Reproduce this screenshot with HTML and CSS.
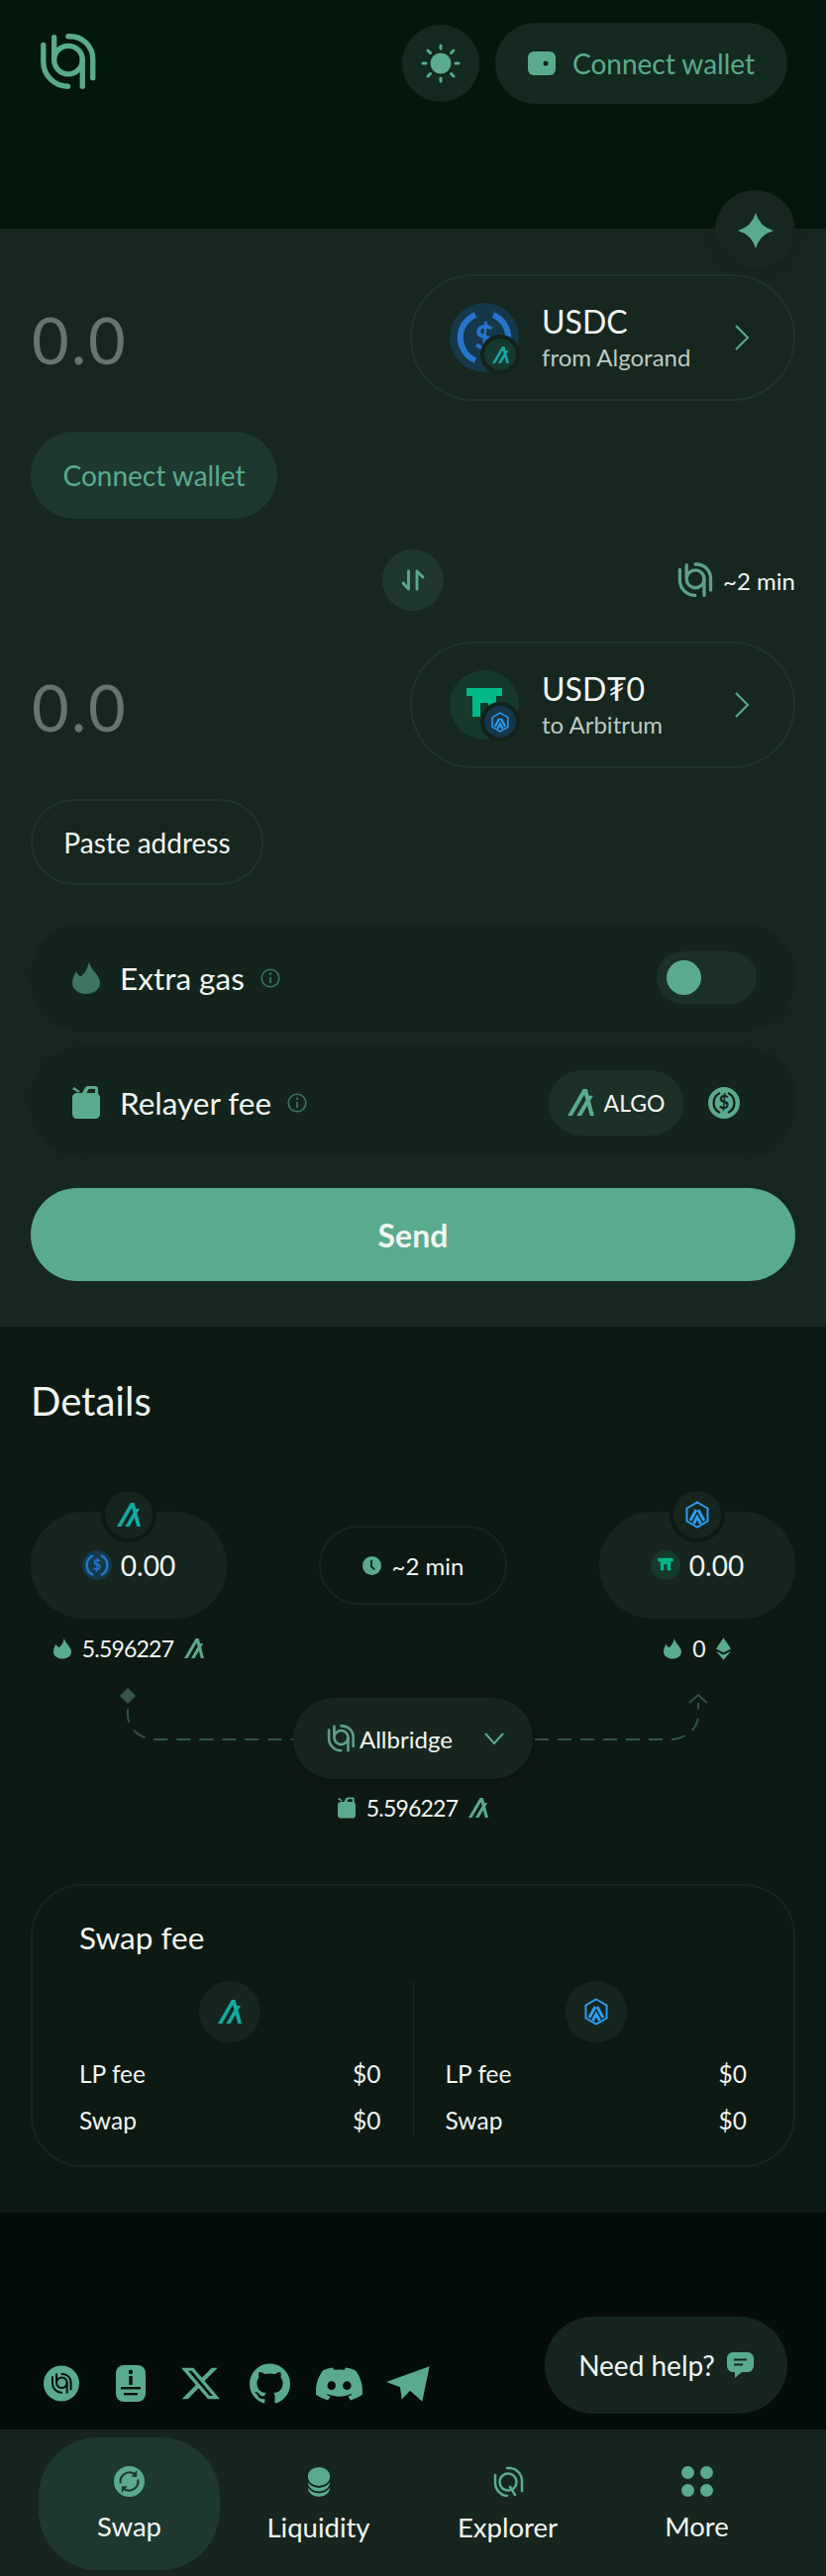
FILE: index.html
```html
<!DOCTYPE html>
<html lang="en">
<head>
<meta charset="utf-8">
<title>Allbridge</title>
<link rel="stylesheet" href="styles.css">
</head>
<body>
<svg class="defs" aria-hidden="true">
  <symbol id="logo" viewBox="36 30 62 64"><g fill="none" stroke="currentColor" stroke-width="5.6" stroke-linecap="round"><path d="M41.6 44V62A26 26 0 0 0 67.500 88"/><path d="M53 36V60A15 15 0 1 0 68 45A15 15 0 0 0 53 60"/><path d="M83 60V88"/><path d="M68 35H70A24 24 0 0 1 94 59V79"/></g></symbol>
  <symbol id="algo" viewBox="0 0 24 24"><path fill="currentColor" d="M23.98 23.99h-3.75l-2.44-9.07-5.25 9.07H8.35l8.1-14.04-1.3-4.87L4.2 24H0L13.9 0h3.7l1.62 6h3.8l-2.6 4.5 3.56 13.49z"/></symbol>
  <symbol id="arb" viewBox="0 0 24 28"><path fill="none" stroke="currentColor" stroke-width="2" d="M12 1.500 22.500 7.500V20.500L12 26.500 1.500 20.500V7.500Z"/><g fill="none" stroke="currentColor" stroke-width="3"><path d="M5 20 11 9"/><path d="M19 20 13 9"/><path d="M8.500 23 12 16.500 15.500 23"/></g></symbol>
  <symbol id="flame" viewBox="0 0 28 33"><path fill="currentColor" d="M17 0C17 8 28 13 28 22 28 29 21 33 14 33 6 33 0 28 0 22 0 17 2 14 4 10 5 13 7 15 9 15 13 12 16 6 17 0Z"/></symbol>
  <symbol id="can" viewBox="0 0 28 33"><path fill="currentColor" d="M5 7H10L13 1.500C13.600.6 14.500 0 15.500 0H23.500C25 0 26 1 26 2.500V7.500C27.200 8.500 28 10 28 12V28C28 31 26 33 23 33H5C2 33 0 31 0 28V12C0 9 2 7 5 7ZM16.500 3 14.500 7H23V3ZM0 3 2 1 8 5.500 6 6.500Z"/></symbol>
  <symbol id="star" viewBox="0 0 36 36"><path fill="currentColor" d="M18 0Q22 14 36 18 22 22 18 36 14 22 0 18 14 14 18 0Z"/></symbol>
  <symbol id="info" viewBox="0 0 20 20"><circle cx="10" cy="10" r="8.800" fill="none" stroke="currentColor" stroke-width="1.600"/><path stroke="currentColor" stroke-width="1.800" d="M10 9V15"/><circle cx="10" cy="5.800" r="1.200" fill="currentColor"/></symbol>
  <symbol id="chev" viewBox="0 0 14 26"><path fill="none" stroke="currentColor" stroke-width="2" d="M1 1 13 13 1 25"/></symbol>
  <symbol id="usdc" viewBox="0 0 70 70"><circle cx="35" cy="35" r="35" fill="#16384a"/><g fill="none" stroke="#2775ca" stroke-width="6"><path d="M26 12A25 25 0 0 0 26 58"/><path d="M44 12A25 25 0 0 1 44 58"/></g></symbol>
  <symbol id="tether" viewBox="0 0 70 70"><circle cx="35" cy="35" r="35" fill="#16392c"/><path fill="#00b988" d="M17 18H53V26H47V47H39V33H31V47H23V26H17Z"/></symbol>
  <symbol id="eth" viewBox="0 0 16 24"><path fill="currentColor" d="M8 0 16 12 8 16 0 12ZM0 14.500 8 18.500 16 14.500 8 24Z"/></symbol>
</svg>

<header class="top">
  <svg class="logo"><use href="#logo"/></svg>
  <button class="round theme" aria-label="Theme">
    <svg width="40" height="40" viewBox="0 0 40 40"><circle cx="20" cy="20" r="10.500" fill="currentColor"/><g stroke="currentColor" stroke-width="3" stroke-linecap="round"><path d="M20 2V5M20 35V38M2 20H5M35 20H38M7 7 9.500 9.500M30.500 30.500 33 33M33 7 30.500 9.500M9.500 30.500 7 33"/></g></svg>
  </button>
  <button class="wallet">
    <svg width="28" height="24" viewBox="0 0 28 24"><rect width="28" height="24" rx="6" fill="currentColor"/><circle cx="18" cy="12" r="2.500" fill="#12261c"/></svg>
    <span>Connect wallet</span>
  </button>
</header>

<main class="card">
  <button class="round sparkle" aria-label="Assistant"><svg width="36" height="36"><use href="#star"/></svg></button>

  <section class="token-row">
    <div class="amount">0.0</div>
    <button class="token">
      <span class="token-icon">
        <svg width="70" height="70" viewBox="0 0 70 70"><use href="#usdc"/><text x="35" y="47" class="dollar" text-anchor="middle" fill="#2775ca">$</text></svg>
        <span class="chain-badge algo-badge"><svg width="17" height="17"><use href="#algo"/></svg></span>
      </span>
      <span class="token-text"><b>USDC</b><small>from Algorand</small></span>
      <svg class="chev" width="14" height="26"><use href="#chev"/></svg>
    </button>
  </section>

  <button class="connect">Connect wallet</button>

  <div class="swap-row">
    <span></span>
    <button class="round swap" aria-label="Swap direction">
      <svg width="24" height="24" viewBox="0 0 24 24"><g fill="none" stroke="currentColor" stroke-width="2.800" stroke-linecap="round" stroke-linejoin="round"><path d="M7.500 3V21L2 15"/><path d="M16 21V3L22 9"/></g></svg>
    </button>
    <span class="eta"><svg width="37" height="38"><use href="#logo"/></svg>~2 min</span>
  </div>

  <section class="token-row">
    <div class="amount">0.0</div>
    <button class="token">
      <span class="token-icon">
        <svg width="70" height="70"><use href="#tether"/></svg>
        <span class="chain-badge arb-badge"><svg width="18" height="21"><use href="#arb"/></svg></span>
      </span>
      <span class="token-text"><b>USD₮0</b><small>to Arbitrum</small></span>
      <svg class="chev" width="14" height="26"><use href="#chev"/></svg>
    </button>
  </section>

  <button class="paste">Paste address</button>

  <section class="option gas">
    <svg class="dim" width="28" height="33"><use href="#flame"/></svg>
    <span class="option-label">Extra gas</span>
    <svg class="info" width="20" height="20"><use href="#info"/></svg>
    <span class="toggle"><i></i></span>
  </section>

  <section class="option fee">
    <svg class="green" width="28" height="33"><use href="#can"/></svg>
    <span class="option-label">Relayer fee</span>
    <svg class="info" width="20" height="20"><use href="#info"/></svg>
    <span class="fee-pill"><svg class="green" width="27" height="27"><use href="#algo"/></svg>ALGO</span>
    <svg class="fee-coin" width="32" height="32" viewBox="0 0 32 32"><circle cx="16" cy="16" r="16" fill="#5aab8d"/><g fill="none" stroke="#12241b" stroke-width="2.400"><path d="M12 6A11 11 0 0 0 12 26"/><path d="M20 6A11 11 0 0 1 20 26"/></g><text x="16" y="22" class="dollar-s" text-anchor="middle" fill="#12241b">$</text></svg>
  </section>

  <button class="send">Send</button>
</main>

<section class="details">
  <h2>Details</h2>
  <div class="chains">
    <div class="chain-box">
      <span class="chain-top teal"><svg width="24" height="26"><use href="#algo"/></svg></span>
      <svg width="30" height="30" viewBox="0 0 70 70"><use href="#usdc"/><text x="35" y="47" class="dollar" text-anchor="middle" fill="#2775ca">$</text></svg><span>0.00</span>
    </div>
    <div class="clock-pill">
      <svg width="19" height="19" viewBox="0 0 20 20"><circle cx="10" cy="10" r="10" fill="#5aab8d"/><path d="M9.500 4V11L13 14" fill="none" stroke="#0d1a13" stroke-width="1.800"/></svg>
      <span>~2 min</span>
    </div>
    <div class="chain-box">
      <span class="chain-top blue"><svg width="24" height="28"><use href="#arb"/></svg></span>
      <svg width="30" height="30"><use href="#tether"/></svg><span>0.00</span>
    </div>
  </div>
  <div class="gas-row">
    <span class="mini"><svg class="green" width="18" height="22"><use href="#flame"/></svg><span>5.596227</span><svg class="green" width="20" height="20"><use href="#algo"/></svg></span>
    <span class="mini"><svg class="green" width="18" height="22"><use href="#flame"/></svg><span>0</span><svg class="green" width="15" height="23"><use href="#eth"/></svg></span>
  </div>
  <div class="route">
    <svg class="route-lines" width="834" height="100" viewBox="0 0 834 100">
      <path d="M129 25 121 33 129 41 137 33Z" fill="#37564a"/>
      <g fill="none" stroke="#2f5546" stroke-width="2" stroke-dasharray="14 9">
        <path d="M129 46V52C129 66 141 77 158 77H296"/>
        <path d="M540 77H676C693 77 705 66 705 52V40"/>
      </g>
      <path d="M696 40 705 32 714 40" fill="none" stroke="#2f5546" stroke-width="2"/>
    </svg>
    <button class="bridge">
      <svg class="green-logo" width="30" height="30"><use href="#logo"/></svg>
      <span>Allbridge</span>
      <svg class="bridge-chev" width="20" height="12" viewBox="0 0 20 12"><path d="M1 1 10 11 19 1" fill="none" stroke="#5aab8d" stroke-width="2"/></svg>
    </button>
  </div>
  <div class="relay"><span class="mini"><svg class="green" width="18" height="22"><use href="#can"/></svg><span>5.596227</span><svg class="green" width="20" height="20"><use href="#algo"/></svg></span></div>

  <div class="fees">
    <h3>Swap fee</h3>
    <div class="fee-grid">
      <div class="fee-col">
        <span class="fee-chain teal"><svg width="24" height="26"><use href="#algo"/></svg></span>
        <div class="fee-line"><span>LP fee</span><span>$0</span></div>
        <div class="fee-line"><span>Swap</span><span>$0</span></div>
      </div>
      <div class="fee-divider"></div>
      <div class="fee-col">
        <span class="fee-chain blue"><svg width="24" height="28"><use href="#arb"/></svg></span>
        <div class="fee-line"><span>LP fee</span><span>$0</span></div>
        <div class="fee-line"><span>Swap</span><span>$0</span></div>
      </div>
    </div>
  </div>
</section>

<footer class="foot">
  <nav class="social">
    <span class="soc"><svg width="36" height="37" viewBox="0 0 36 37"><circle cx="18" cy="18.500" r="18" fill="#5aab8d"/><svg x="7" y="7" width="22" height="23" class="on-green"><use href="#logo"/></svg></svg></span>
    <span class="soc"><svg width="30" height="37" viewBox="0 0 30 37"><rect width="30" height="37" rx="8" fill="#5aab8d"/><g fill="#04100a"><circle cx="15" cy="7" r="2.200"/><rect x="13.300" y="11" width="3.400" height="9"/><rect x="5" y="22" width="20" height="2.400"/><rect x="8" y="28" width="14" height="2.400"/></g></svg></span>
    <span class="soc"><svg width="39" height="35" viewBox="0 0 24 24" preserveAspectRatio="none"><path fill="#5aab8d" d="M18.901 1.153h3.68l-8.04 9.19L24 22.846h-7.406l-5.8-7.584-6.638 7.584H.474l8.6-9.83L0 1.154h7.594l5.243 6.932ZM17.610 20.644h2.039L6.486 3.240H4.298Z"/></svg></span>
    <span class="soc"><svg width="41" height="41" viewBox="0 0 24 24"><path fill="#5aab8d" d="M12 .297c-6.630 0-12 5.373-12 12 0 5.303 3.438 9.800 8.205 11.385.6.113.82-.258.82-.577 0-.285-.01-1.040-.015-2.040-3.338.724-4.042-1.610-4.042-1.610C4.422 18.070 3.633 17.700 3.633 17.700c-1.087-.744.084-.729.084-.729 1.205.084 1.838 1.236 1.838 1.236 1.070 1.835 2.809 1.305 3.495.998.108-.776.417-1.305.76-1.605-2.665-.3-5.466-1.332-5.466-5.930 0-1.310.465-2.380 1.235-3.220-.135-.303-.54-1.523.105-3.176 0 0 1.005-.322 3.300 1.230.96-.267 1.980-.399 3-.405 1.020.006 2.040.138 3 .405 2.280-1.552 3.285-1.230 3.285-1.230.645 1.653.24 2.873.12 3.176.765.84 1.230 1.910 1.230 3.220 0 4.610-2.805 5.625-5.475 5.920.42.36.81 1.096.81 2.220 0 1.606-.015 2.896-.015 3.286 0 .315.21.69.825.57C20.565 22.092 24 17.592 24 12.297c0-6.627-5.373-12-12-12"/></svg></span>
    <span class="soc"><svg width="47" height="36" viewBox="0 2 24 20" preserveAspectRatio="none"><path fill="#5aab8d" d="M20.317 4.370a19.791 19.791 0 0 0-4.885-1.515.074.074 0 0 0-.079.037c-.21.375-.444.864-.608 1.250a18.270 18.270 0 0 0-5.487 0 12.640 12.640 0 0 0-.617-1.250.077.077 0 0 0-.079-.037A19.736 19.736 0 0 0 3.677 4.370a.07.07 0 0 0-.032.027C.533 9.046-.32 13.580.099 18.057a.082.082 0 0 0 .031.057 19.900 19.900 0 0 0 5.993 3.030.078.078 0 0 0 .084-.028 14.090 14.090 0 0 0 1.226-1.994.076.076 0 0 0-.041-.106 13.107 13.107 0 0 1-1.872-.892.077.077 0 0 1-.008-.128 10.200 10.200 0 0 0 .372-.292.074.074 0 0 1 .077-.01c3.928 1.793 8.180 1.793 12.062 0a.074.074 0 0 1 .078.01c.12.098.246.198.373.292a.077.077 0 0 1-.006.127 12.299 12.299 0 0 1-1.873.892.077.077 0 0 0-.041.107c.36.698.772 1.362 1.225 1.993a.076.076 0 0 0 .084.028 19.839 19.839 0 0 0 6.002-3.030.077.077 0 0 0 .032-.054c.5-5.177-.838-9.674-3.549-13.660a.061.061 0 0 0-.031-.03zM8.020 15.330c-1.183 0-2.157-1.085-2.157-2.419 0-1.333.956-2.419 2.157-2.419 1.210 0 2.176 1.096 2.157 2.420 0 1.333-.956 2.418-2.157 2.418zm7.975 0c-1.183 0-2.157-1.085-2.157-2.419 0-1.333.955-2.419 2.157-2.419 1.210 0 2.176 1.096 2.157 2.420 0 1.333-.946 2.418-2.157 2.418z"/></svg></span>
    <span class="soc"><svg width="44" height="36" viewBox="0 0 132 108"><path fill="#5aab8d" d="M131 1 0 48 42 64 47 101 72 74 109 107Z"/></svg></span>
  </nav>
  <button class="help"><span>Need help?</span>
    <svg width="27" height="26" viewBox="0 0 27 26"><path fill="#5aab8d" d="M6 0H21A6 6 0 0 1 27 6V14A6 6 0 0 1 21 20H15L8 26V20H6A6 6 0 0 1 0 14V6A6 6 0 0 1 6 0Z"/><path d="M7 7.500H20M7 12.500H16" stroke="#16261f" stroke-width="2.200"/></svg>
  </button>
</footer>

<nav class="tabs">
  <a class="tab active">
    <svg width="31" height="31" viewBox="0 0 32 32"><circle cx="16" cy="16" r="16" fill="#5aab8d"/><g fill="none" stroke="#1e3830" stroke-width="2.200"><path d="M7 18A9.500 9.500 0 0 1 22 8.500"/><path d="M25 14A9.500 9.500 0 0 1 10 23.500"/></g><path d="M24 4V11H18Z" fill="#1e3830"/><path d="M8 28V21H14Z" fill="#1e3830"/></svg>
    <span>Swap</span>
  </a>
  <a class="tab">
    <svg width="26" height="32" viewBox="-1 0 26 32"><g fill="#5aab8d" stroke="#16261f" stroke-width="1.800"><ellipse cx="12" cy="21.500" rx="12" ry="10.500"/><ellipse cx="12" cy="16" rx="12" ry="10.500"/><ellipse cx="12" cy="10.500" rx="12" ry="10.500"/></g></svg>
    <span>Liquidity</span>
  </a>
  <a class="tab">
    <svg class="green" width="32" height="32" viewBox="0 0 32 32"><g fill="none" stroke="currentColor" stroke-width="2.500" stroke-linecap="round"><path d="M3 9V17A13 13 0 0 0 15 30"/><circle cx="16" cy="16" r="8.500"/><path d="M18 21 23 29"/><path d="M15 2H17A13 13 0 0 1 30 15V25"/></g></svg>
    <span>Explorer</span>
  </a>
  <a class="tab">
    <span class="dots"><i></i><i></i><i></i><i></i></span>
    <span>More</span>
  </a>
</nav>
</body>
</html>
```

FILE: styles.css
```css
* { box-sizing: border-box; }
html, body { margin: 0; padding: 0; }
body {
  width: 834px;
  height: 2602px;
  overflow: hidden;
  background: #04100a;
  color: #f1f5f2;
  font-family: "Lato", "Noto Sans", sans-serif;
  font-size: 28px;
}
.defs { position: absolute; width: 0; height: 0; }
button {
  font: inherit;
  color: inherit;
  background: none;
  border: 0;
  padding: 0;
}
h2, h3 { margin: 0; font-weight: 400; }

.green { color: #5aab8d; }
.dim { color: #3d7562; }
.teal { color: #13aaa4; }
.blue { color: #2d9cf0; }
.dollar { font: 700 34px "Lato", sans-serif; }
.dollar-s { font: 700 18px "Lato", sans-serif; }

.top {
  height: 231px;
  background: #04170d;
  display: flex;
  align-items: flex-start;
  padding: 23px 39px 0 38px;
  color: #5aab8d;
}
.logo { width: 60px; height: 61px; margin-top: 9px; margin-right: auto; color: #5aab8d; }
.round {
  display: flex;
  align-items: center;
  justify-content: center;
  border-radius: 50%;
}
.theme {
  width: 78px;
  height: 78px;
  margin: 2px 16px 0 0;
  background: #14291f;
  color: #5aab8d;
}
.wallet {
  height: 82px;
  width: 295px;
  border-radius: 41px;
  background: #14291f;
  color: #5aab8d;
  display: flex;
  align-items: center;
  justify-content: center;
  gap: 17px;
}

.card {
  position: relative;
  height: 1109px;
  padding: 46px 31px 0;
  background: #16271f;
}
.sparkle {
  position: absolute;
  top: -39px;
  right: 31px;
  width: 81px;
  height: 81px;
  background: #16271f;
  color: #5aab8d;
  box-shadow: 0 2px 8px rgba(10, 22, 16, 0.25);
}
.token-row {
  display: flex;
  align-items: center;
  justify-content: space-between;
  height: 128px;
}
.amount {
  font-size: 65px;
  font-weight: 400;
  line-height: 70px;
  color: #63756d;
  margin-top: 4px;
  letter-spacing: 2px;
  padding-left: 1px;
}
.token {
  width: 389px;
  height: 128px;
  border: 2px solid #1e3329;
  border-radius: 64px;
  display: flex;
  align-items: center;
  padding-left: 38px;
  text-align: left;
}
.token-icon { position: relative; width: 70px; height: 70px; flex: none; }
.chain-badge {
  position: absolute;
  right: -1px;
  bottom: -2px;
  width: 40px;
  height: 40px;
  border-radius: 50%;
  border: 4px solid #12221a;
  display: flex;
  align-items: center;
  justify-content: center;
}
.algo-badge { background: #16392f; color: #13aaa4; }
.arb-badge { background: #17364a; color: #2d9cf0; }
.token-text {
  display: flex;
  flex-direction: column;
  margin-left: 23px;
  flex: 1;
}
.token-text b { font-weight: 400; font-size: 32px; line-height: 40px; }
.token-text small { font-size: 24px; line-height: 32px; color: #bccac3; }
.chev { color: #5aab8d; margin-right: 45px; flex: none; }

.connect {
  display: block;
  margin-top: 31px;
  width: 249px;
  height: 88px;
  border-radius: 44px;
  background: #1e3830;
  color: #5aab8d;
}
.swap-row {
  margin-top: 31px;
  height: 62px;
  display: grid;
  grid-template-columns: 1fr 62px 1fr;
  align-items: center;
}
.swap-row + .token-row { margin-top: 31px; }
.swap { width: 62px; height: 62px; background: #20372f; color: #5aab8d; }
.eta {
  display: flex;
  justify-content: flex-end;
  align-items: center;
  gap: 10px;
  font-size: 24px;
  color: #f1f5f2;
}
.eta svg { color: #5f9e8c; }
.paste {
  display: block;
  margin-top: 31px;
  width: 235px;
  height: 87px;
  border: 2px solid #1e3329;
  border-radius: 44px;
}
.option {
  display: flex;
  align-items: center;
  background: #12241b;
  border-radius: 52px;
  padding-left: 42px;
}
.gas { height: 109px; margin-top: 39px; padding-right: 39px; }
.fee { height: 113px; margin-top: 15px; padding-right: 56px; }
.option-label { font-size: 31.500px; margin-left: 20px; }
.info { color: #3d7562; margin-left: 16px; margin-right: auto; }
.toggle {
  width: 101px;
  height: 53px;
  border-radius: 27px;
  background: #1b3027;
  display: flex;
  align-items: center;
  padding-left: 10px;
}
.toggle i { width: 35px; height: 35px; border-radius: 50%; background: #5aab8d; }
.fee-pill {
  width: 136px;
  height: 66px;
  border-radius: 33px;
  background: #1b3027;
  display: flex;
  align-items: center;
  justify-content: center;
  gap: 10px;
  font-size: 23px;
}
.fee-coin { margin-left: 25px; }
.send {
  display: block;
  width: 100%;
  height: 94px;
  margin-top: 30px;
  border-radius: 47px;
  background: #5aab8d;
  font-size: 32px;
  font-weight: 700;
}

.details {
  height: 895px;
  padding: 51px 31px 0;
  background: #0d1a13;
}
.details h2 { font-size: 40px; line-height: 48px; }
.chains {
  margin-top: 88px;
  display: flex;
  justify-content: space-between;
  align-items: center;
}
.chain-box {
  position: relative;
  width: 198px;
  height: 108px;
  border-radius: 54px;
  background: #16261f;
  display: flex;
  align-items: center;
  justify-content: center;
  gap: 9px;
}
.chain-top {
  position: absolute;
  top: -25px;
  left: 71px;
  width: 56px;
  height: 56px;
  border-radius: 50%;
  background: #16261f;
  border: 4px solid #0d1a13;
  display: flex;
  align-items: center;
  justify-content: center;
}
.clock-pill {
  width: 190px;
  height: 80px;
  border: 2px solid #16261f;
  border-radius: 40px;
  display: flex;
  align-items: center;
  justify-content: center;
  gap: 11px;
  font-size: 24px;
}
.gas-row {
  margin-top: 15px;
  display: flex;
  justify-content: space-between;
}
.gas-row .mini { width: 198px; }
.mini {
  height: 30px;
  display: flex;
  align-items: center;
  justify-content: center;
  gap: 11px;
  font-size: 23px;
  letter-spacing: -0.800px;
}
.route {
  position: relative;
  display: flex;
  justify-content: center;
  padding-top: 35px;
}
.route-lines {
  position: absolute;
  left: -31px;
  top: 0;
}
.bridge {
  position: relative;
  width: 242px;
  height: 82px;
  border-radius: 41px;
  background: #16261f;
  display: flex;
  align-items: center;
  justify-content: flex-start;
  padding-left: 33px;
  gap: 4px;
  font-size: 24px;
  box-shadow: 0 2px 10px rgba(5, 12, 8, 0.4);
}
.green-logo { color: #5f9e8c; }
.bridge-chev { margin-left: 28px; }
.relay { margin-top: 14px; }
.fees {
  margin-top: 62px;
  height: 286px;
  border: 2px solid #16261f;
  border-radius: 52px;
  padding: 32px 47px 0;
}
.fees h3 { font-size: 31.500px; line-height: 40px; }
.fee-grid {
  margin-top: 24px;
  display: grid;
  grid-template-columns: 1fr 1px 1fr;
  column-gap: 32px;
}
.fee-divider { background: #1a2c23; }
.fee-col { display: flex; flex-direction: column; }
.fee-chain {
  width: 62px;
  height: 62px;
  align-self: center;
  border-radius: 50%;
  background: #16261f;
  display: flex;
  align-items: center;
  justify-content: center;
}
.fee-line {
  display: flex;
  justify-content: space-between;
  height: 30px;
  line-height: 30px;
  margin-top: 17px;
  font-size: 24.500px;
}

.foot {
  height: 219px;
  background: #040d08;
  display: flex;
  align-items: flex-end;
  padding: 0 39px 16px 27px;
}
.social {
  display: flex;
  margin-bottom: 10px;
  margin-right: auto;
}
.soc {
  width: 70px;
  height: 41px;
  display: flex;
  align-items: center;
  justify-content: center;
}
.on-green { color: #04100a; }
.help {
  width: 245px;
  height: 98px;
  border-radius: 49px;
  background: #16261f;
  display: flex;
  align-items: center;
  justify-content: center;
  gap: 12px;
}
.tabs {
  height: 148px;
  background: #16261f;
  display: grid;
  grid-template-columns: repeat(4, 191px);
  padding: 8px 35px 6px;
}
.tab {
  justify-self: center;
  width: 183px;
  height: 134px;
  border-radius: 60px;
  display: flex;
  flex-direction: column;
  align-items: center;
  padding-top: 29px;
  gap: 14px;
  line-height: 32px;
  font-size: 27.500px;
}
.tab.active { background: #1e3830; }
.dots {
  width: 32px;
  height: 31px;
  display: grid;
  grid-template-columns: 13px 13px;
  justify-content: space-between;
  align-content: space-between;
}
.dots i { width: 13px; height: 13px; border-radius: 50%; background: #5aab8d; }
```
